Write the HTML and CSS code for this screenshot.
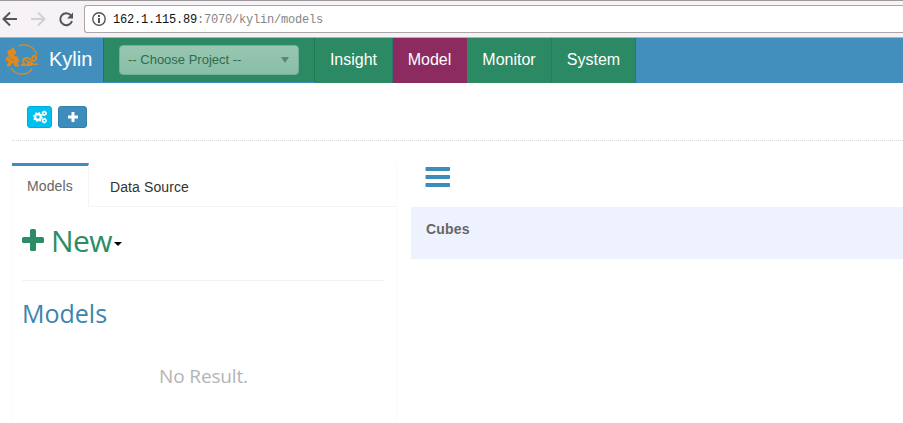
FILE: index.html
```
<!DOCTYPE html>
<html lang="en">
<head>
<meta charset="utf-8">
<title>Kylin</title>
<link rel="stylesheet" href="styles.css">
</head>
<body>
<div class="browser">
  <svg class="nav-icons" width="84" height="36" viewBox="0 0 84 36" fill="none" stroke-width="2">
    <path d="M17 18H4M10 11.5L3.5 18L10 24.5" stroke="#555"/>
    <path d="M31 18H44M38 11.5L44.500 18L38 24.500" stroke="#d2d0d2"/>
    <path d="M71 14.500A6 6 0 1 0 72 20" stroke="#555"/>
    <path d="M73 11.500V17.500H67Z" fill="#555"/>
  </svg>
  <div class="address">
    <svg width="14" height="14" viewBox="0 0 14 14" fill="none" stroke="#555"><circle cx="7" cy="7" r="6.200" stroke-width="1.400"/><path d="M7 6V11M7 3V5" stroke-width="2"/></svg>
    <span class="url"><b>162.1.115.89</b>:7070/kylin/models</span>
  </div>
</div>
<nav class="navbar">
  <a class="brand">
    <svg width="36" height="34" viewBox="0 0 36 34" fill="none" stroke="#dd8a20">
      <path d="M13 3C21 0 29 3 32 12" stroke-width="1.200"/>
      <path d="M6 25C11 33 22 33 27 26" stroke-width="1.300"/>
      <path d="M3 8L6 7L8 4.500L9 7L11 9L10 11H8L9 13L12 14L14 18L12 20L14 23H10L9 20L7 19L5 23H2L4 19L3 17L1 18L2 14L5 12L3 11Z" fill="#dd8a20"/>
      <path d="M2 13L5 15M6 16L9 17" stroke="#428fbe" stroke-width=".8"/>
      <path d="M16 22H20L18 19C18 14 23 14 26 17C29 19 32 17 31 14C29 11 26 14 28 16" stroke-width="1.800"/>
      <path d="M20 17L24 19L22 22H26L25 19C27 21 30 22 33 21" stroke-width="1.800"/>
    </svg>
    <span>Kylin</span>
  </a>
  <div class="project"><div class="select"><span>-- Choose Project --</span><i></i></div></div>
  <a class="item insight">Insight</a><a class="item model">Model</a><a class="item monitor">Monitor</a><a class="item system">System</a>
</nav>
<div class="toolbar">
  <button class="btn gears"><svg width="14" height="14" viewBox="0 0 14 14" fill="none" stroke="#fff"><circle cx="5" cy="7" r="2.800" stroke-width="2.200"/><circle cx="5" cy="7" r="4.200" stroke-width="1.500" stroke-dasharray="1.650 1.650"/><circle cx="11.300" cy="3.300" r="1.600" stroke-width="1.500"/><circle cx="11.300" cy="3.300" r="2.400" stroke-dasharray="1.250 1.250"/><circle cx="11.300" cy="10.700" r="1.600" stroke-width="1.500"/><circle cx="11.300" cy="10.700" r="2.400" stroke-dasharray="1.250 1.250"/></svg></button>
  <button class="btn add"><svg width="10" height="10" viewBox="0 0 10 10"><path d="M5 0V10M0 5H10" stroke="#fff" stroke-width="3" fill="none"/></svg></button>
</div>
<main class="content">
  <section class="side">
    <div class="tabs"><a class="tab active">Models</a><a class="tab source">Data Source</a></div>
    <div class="pane">
      <div class="new"><svg width="22" height="22" viewBox="0 0 22 22"><rect x="8" width="6" height="22" rx="1.500" fill="#2b8c66"/><rect y="8" width="22" height="6" rx="1.500" fill="#2b8c66"/></svg><span>New</span><i></i></div>
      <h3>Models</h3>
      <div class="empty">No Result.</div>
    </div>
  </section>
  <section class="main">
    <svg class="bars" width="25" height="20" viewBox="0 0 25 20" fill="#3c8dbc"><rect x=".5" width="24.500" height="4" rx=".7"/><rect x=".5" y="8" width="24.500" height="4" rx=".7"/><rect x=".5" y="16" width="24.500" height="4" rx=".7"/></svg>
    <div class="cubes">Cubes</div>
  </section>
</main>
</body>
</html>
```
FILE: styles.css
```
* { box-sizing: border-box; }
body { margin: 0; height: 423px; overflow: hidden; background: #fff; color: #333; font-family: "Liberation Sans", Arial, sans-serif; }
svg { display: block; flex: none; }
.browser { height: 38px; display: flex; background: #f6f2f6; border-top: 1px solid #9c9a9c; border-bottom: 1px solid #b4b0b4; }
.address { flex: 1; height: 28px; margin-top: 4px; padding-left: 7px; display: flex; align-items: center; background: #fff; border: 1px solid #aaa6aa; border-right: 0; border-radius: 3px 0 0 3px; }
.url { margin: 2px 0 0 7px; font: 12px/16px "Liberation Mono", monospace; letter-spacing: -.2px; color: #858585; white-space: nowrap; }
.url b { font-weight: 400; color: #111; }
.navbar { height: 45px; display: flex; background: #428fbe; color: #fff; }
.brand { width: 103px; padding: 5px 0 0 5px; display: flex; font-size: 20px; line-height: 33px; }
.brand span { margin-left: 8px; }
.project { width: 212px; height: 44px; padding: 7px 15px 0; background: #2b8a63; border-left: 1px solid #227753; border-right: 1px solid #227753; }
.select { height: 30px; padding: 0 9px 1px 8px; display: flex; justify-content: space-between; align-items: center; border: 1px solid #73b096; border-radius: 4px; background: linear-gradient(#98c7b2, #8abea6); color: #306a50; font-size: 13px; }
.select i { border: 4px solid transparent; border-top: 6px solid #548b72; border-bottom: 0; }
.item { height: 45px; text-align: center; line-height: 44px; font-size: 16px; background: #2b8a63; border-right: 1px solid #28786f; }
.insight { width: 78px; }
.model { width: 74px; background: #8b2b60; border-right-color: #8b2b60; }
.monitor { width: 85px; }
.system { width: 84px; }
.toolbar { height: 58px; margin-left: 12px; padding: 23px 0 0 15px; display: flex; gap: 6px; border-bottom: 1px dotted #d6d6d6; }
.btn { height: 22px; padding: 0; display: flex; align-items: center; justify-content: center; border: 1px solid; border-radius: 3px; }
.gears { width: 25px; background: #00c0ef; border-color: #00acd6; }
.add { width: 29px; background: #3c8dbc; border-color: #367fa9; }
.content { display: flex; margin: 22px 0 0 12px; }
.side { width: 385px; height: 257px; border-left: 1px solid #fafafa; border-right: 1px solid #fcf8f9; }
.tabs { display: flex; height: 44px; margin-left: -1px; font-size: 14px; letter-spacing: .1px; }
.tab { border-bottom: 1px solid #f4f4f4; }
.active { width: 77px; padding: 12px 0 0 15px; line-height: 17px; border-top: 3px solid #3c8dbc; border-right: 1px solid #f4f4f4; border-bottom: 0; color: #666; }
.source { flex: 1; padding: 16px 0 0 21px; line-height: 17px; }
.pane { padding: 0 11px 0 9px; font-family: "Open Sans", "Noto Sans", sans-serif; }
.new { height: 74px; display: flex; align-items: center; padding-bottom: 7px; border-bottom: 1px solid #f2f2f2; color: #2b8c66; font-size: 30px; }
.new span { margin-left: 7px; letter-spacing: -.6px; }
.new i { margin: 7px 0 0 2px; border: 4px solid transparent; border-top-color: #000; border-bottom: 0; }
h3 { margin: 15px 0 0; font-size: 25px; line-height: 34px; font-weight: 400; color: #3c85b0; }
.empty { margin-top: 33px; text-align: center; font-size: 19px; line-height: 26px; letter-spacing: -.15px; color: #b5b5b5; }
.main { flex: 1; margin-left: 14px; }
.bars { margin: 4px 0 0 14px; }
.cubes { height: 52px; margin-top: 20px; padding: 14px 15px; background: #eef2ff; color: #666; font-size: 14px; letter-spacing: .2px; line-height: 17px; font-weight: 700; }
```
